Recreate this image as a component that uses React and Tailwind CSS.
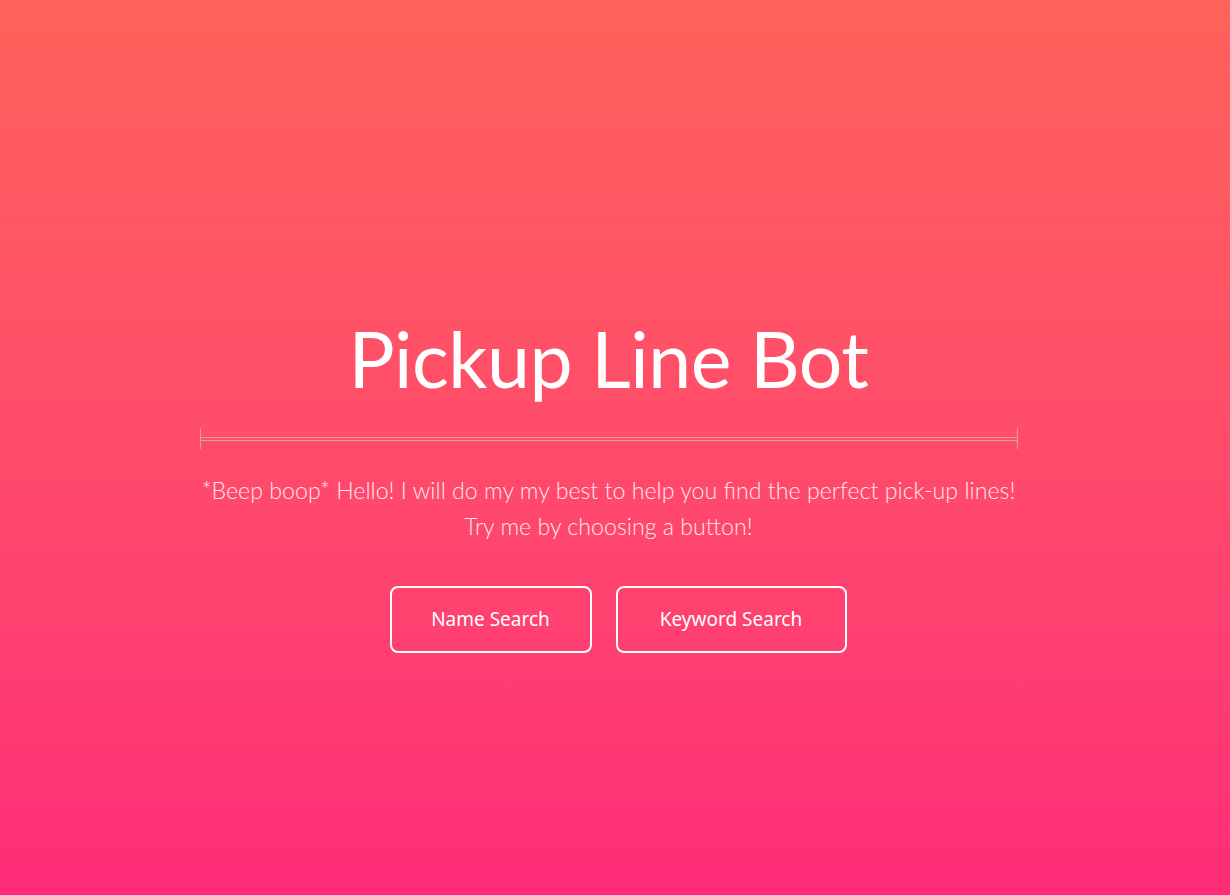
export default function App() {
  const buttons = [
    { label: 'Name Search', width: 'w-[202px]' },
    { label: 'Keyword Search', width: 'w-[231px]' }
  ]

  return (
    <div className="min-h-screen w-full bg-gradient-to-b from-[#ff625a] to-[#ff2b78] flex flex-col items-center pt-[318px] text-white">
      <div className="flex flex-col items-center mr-[13px]">
        <h1 className="font-['Lato',sans-serif] font-normal text-[77px] leading-[80px] tracking-[-0.5px]">
          Pickup Line Bot
        </h1>

        {/* double rule with end ticks */}
        <div className="mt-[30px] w-[818px] h-[21px] border-x border-[#d9a0a6] flex items-center">
          <div className="w-full h-[4px] border-y border-[#d9a0a6]" />
        </div>

        <p className="mt-[23px] font-['Lato',sans-serif] font-light text-[23.2px] leading-[36px] text-center text-[#ffe8ec]">
          *Beep boop* Hello! I will do my my best to help you find the perfect pick-up lines!
          <br />
          Try me by choosing a button!
        </p>
      </div>

      <div className="mt-[42px] ml-[6px] flex gap-[24px]">
        {buttons.map((b) => (
          <button
            key={b.label}
            className={`${b.width} h-[67px] rounded-[8px] border-2 border-white font-['Noto_Sans',sans-serif] text-[19px] text-white`}
          >
            {b.label}
          </button>
        ))}
      </div>
    </div>
  )
}
